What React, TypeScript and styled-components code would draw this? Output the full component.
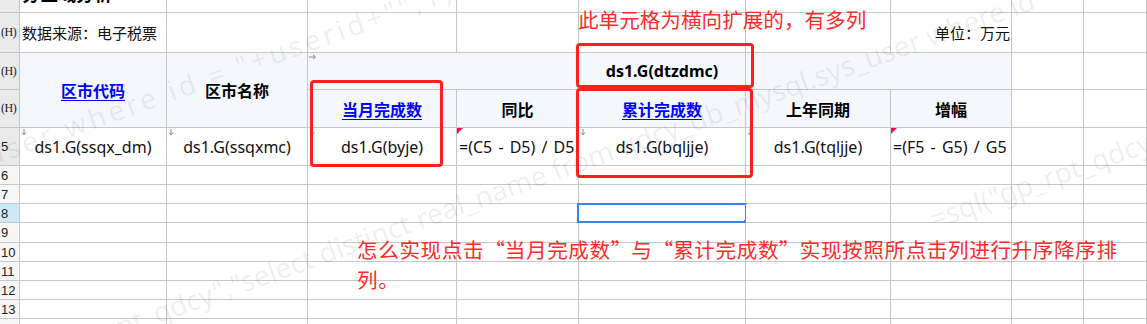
import React from 'react'
import styled, { createGlobalStyle } from 'styled-components'

const GlobalStyle = createGlobalStyle`
  html, body { margin: 0; padding: 0; background: #fff; }
  body { font-family: "Noto Sans", "Noto Sans CJK SC", sans-serif; }
`

const WM = '=sql("gp_rpt_qdcy","select distinct real_name from qdcy_db_mysql.sys_user where id = "+userid+"",1)+"'
const GAP = '          '

type Kind = 'plain' | 'bold' | 'link' | 'title' | 'formula'
type Spec = {
  col: number
  span?: number
  rowSpan?: number
  text?: string
  kind?: Kind
  align?: 'left' | 'center' | 'right'
  mark?: 'down' | 'right'
  corner?: boolean
  head?: boolean
  selected?: boolean
}

const Viewport = styled.div`
  position: relative;
  width: 1147px;
  height: 324px;
  overflow: hidden;
  background: #fff;
`

// first row is scrolled half out of view
const Sheet = styled.div`
  display: grid;
  grid-template-columns: 20px 147px 141px 149px 122px 167px 145px 121px 72px 1fr;
  grid-template-rows: 30px 40px 37px 38px 38px 19px 19px 19px 20px 19px 19px 19px 19px 19px;
  margin-top: -17px;
  color: #111;
`

const Cell = styled.div<{
  $col: number
  $row: number
  $span: number
  $rowSpan: number
  $align: string
  $head: boolean
}>`
  grid-column: ${p => p.$col + 1} / span ${p => p.$span};
  grid-row: ${p => p.$row} / span ${p => p.$rowSpan};
  position: relative;
  box-sizing: border-box;
  border-right: 1px solid #c6c6c6;
  border-bottom: 1px solid #c6c6c6;
  background: ${p => (p.$head ? '#f4f8fd' : '#fff')};
  display: flex;
  align-items: center;
  justify-content: ${p => (p.$align === 'left' ? 'flex-start' : p.$align === 'right' ? 'flex-end' : 'center')};
  padding: ${p => (p.$align === 'left' ? '0 0 0 2px' : p.$align === 'right' ? '0 1px 0 0' : '0')};
  font-size: 15px;
  white-space: nowrap;
`

const RowHead = styled.div<{ $row: number; $tone: 'dark' | 'light' | 'active' }>`
  grid-column: 1;
  grid-row: ${p => p.$row};
  box-sizing: border-box;
  border-right: 1px solid #c6c6c6;
  border-bottom: 1px solid #c6c6c6;
  background: ${p => (p.$tone === 'dark' ? '#eaeaea' : p.$tone === 'active' ? '#cde8f6' : '#f6f6f6')};
  display: flex;
  align-items: center;
  padding-left: 1px;
  font-family: "Liberation Sans", sans-serif;
  font-size: 13px;
  color: #222;
`

const HLabel = styled.span`
  font-family: "Liberation Serif", serif;
  font-size: 12px;
  letter-spacing: -0.5px;
`

const Title = styled.span`
  font-family: "Noto Sans CJK SC", sans-serif;
  font-weight: 700;
  font-size: 18px;
  color: #000;
  margin-bottom: 10px;
`

const Plain = styled.span`
  font-family: "Noto Sans", "Noto Sans CJK SC", sans-serif;
  font-size: 15px;
  color: #111;
`

const Value = styled(Plain)`
  font-size: 16px;
`

const Formula = styled(Value)`
  word-spacing: 2px;
`

const Bold = styled.span`
  font-family: "Noto Sans", "Noto Sans CJK SC", sans-serif;
  font-weight: 700;
  font-size: 16px;
  color: #000;
`

const Link = styled.span`
  font-family: "Noto Sans CJK SC", sans-serif;
  font-weight: 700;
  font-size: 16px;
  color: #0000ff;
  text-decoration: underline;
  text-underline-offset: 3px;
`

const Mark = styled.svg`
  position: absolute;
  left: 1px;
  top: 1px;
`

const RedCorner = styled.span`
  position: absolute;
  left: 0;
  top: 0;
  width: 0;
  height: 0;
  border-top: 6px solid #ff0a3c;
  border-right: 6px solid transparent;
`

const Selection = styled.span`
  position: absolute;
  left: -2px;
  top: -1px;
  width: 170px;
  height: 20px;
  box-sizing: border-box;
  border: 2px solid #3a86e8;

  &::after {
    content: '';
    position: absolute;
    right: -4px;
    bottom: -4px;
    width: 5px;
    height: 5px;
    background: #3a86e8;
  }
`

const RedBox = styled.div<{ $x: number; $y: number; $w: number; $h: number }>`
  position: absolute;
  left: ${p => p.$x}px;
  top: ${p => p.$y}px;
  width: ${p => p.$w}px;
  height: ${p => p.$h}px;
  box-sizing: border-box;
  border: 3px solid #ff1f1f;
  border-radius: 4px;
  pointer-events: none;
`

const Note = styled.div<{ $x: number; $y: number; $w: number; $spacing?: number }>`
  position: absolute;
  left: ${p => p.$x}px;
  top: ${p => p.$y}px;
  width: ${p => p.$w}px;
  color: #ff2b2b;
  font-family: "Noto Sans CJK SC", sans-serif;
  font-size: 20.6px;
  line-height: 30px;
  letter-spacing: ${p => p.$spacing ?? 0}px;
`

// full-width CJK quotation marks
const Quote = styled.span<{ $side: 'open' | 'close' }>`
  display: inline-block;
  width: 1em;
  text-align: ${p => (p.$side === 'open' ? 'right' : 'left')};
`

const Watermark = styled.div<{ $x: number; $y: number; $spacing?: number }>`
  position: absolute;
  left: ${p => p.$x}px;
  top: ${p => p.$y}px;
  transform: rotate(-19.7deg);
  transform-origin: 0 0;
  white-space: pre;
  font-family: "Noto Sans", sans-serif;
  font-size: 28px;
  line-height: 32px;
  letter-spacing: ${p => p.$spacing ?? 0}px;
  color: rgba(0, 0, 0, 0.07);
  pointer-events: none;
`

const DownArrow = () => (
  <Mark width="6" height="7" viewBox="0 0 6 7">
    <path d="M3 0v5M1 3.5L3 6 5 3.5" stroke="#8a8a8a" strokeWidth="1" fill="none" />
  </Mark>
)

const RightArrow = () => (
  <Mark width="8" height="6" viewBox="0 0 8 6">
    <path d="M0 3h6M4 1l2.5 2L4 5" stroke="#8a8a8a" strokeWidth="1" fill="none" />
  </Mark>
)

const blanks = (cols: number[]): Spec[] => cols.map(col => ({ col }))

const rows: Spec[][] = [
  [{ col: 1, text: '分区域分析', kind: 'title', align: 'left' }, ...blanks([2, 3, 4, 5, 6, 7, 8, 9])],
  [
    { col: 1, text: '数据来源：电子税票', align: 'left' },
    ...blanks([2, 3, 4, 5, 6]),
    { col: 7, text: '单位：万元', align: 'right' },
    ...blanks([8, 9]),
  ],
  [
    { col: 1, rowSpan: 2, text: '区市代码', kind: 'link', head: true },
    { col: 2, rowSpan: 2, text: '区市名称', kind: 'bold', head: true },
    { col: 3, span: 2, head: true, mark: 'right' },
    { col: 5, text: 'ds1.G(dtzdmc)', kind: 'bold', head: true },
    { col: 6, span: 2, head: true },
    ...blanks([8, 9]),
  ],
  [
    { col: 3, text: '当月完成数', kind: 'link', head: true },
    { col: 4, text: '同比', kind: 'bold', head: true },
    { col: 5, text: '累计完成数', kind: 'link', head: true },
    { col: 6, text: '上年同期', kind: 'bold', head: true },
    { col: 7, text: '增幅', kind: 'bold', head: true },
    ...blanks([8, 9]),
  ],
  [
    { col: 1, text: 'ds1.G(ssqx_dm)', mark: 'down' },
    { col: 2, text: 'ds1.G(ssqxmc)', mark: 'down' },
    { col: 3, text: 'ds1.G(byje)', mark: 'down' },
    { col: 4, text: '=(C5 - D5) / D5', kind: 'formula', align: 'left', corner: true },
    { col: 5, text: 'ds1.G(bqljje)', mark: 'down' },
    { col: 6, text: 'ds1.G(tqljje)', mark: 'down' },
    { col: 7, text: '=(F5 - G5) / G5', kind: 'formula', align: 'left', corner: true },
    ...blanks([8, 9]),
  ],
]

for (let r = 6; r <= 14; r++) {
  rows.push(blanks([1, 2, 3, 4, 5, 6, 7, 8, 9]).map(c => (r === 8 && c.col === 5 ? { ...c, selected: true } : c)))
}

const rowLabel = (r: number) => {
  if (r === 1 || r === 14) return null
  if (r <= 4) return <HLabel>(H)</HLabel>
  return String(r)
}

const renderText = (s: Spec, r: number) => {
  if (!s.text) return null
  switch (s.kind) {
    case 'title':
      return <Title>{s.text}</Title>
    case 'bold':
      return <Bold>{s.text}</Bold>
    case 'link':
      return <Link>{s.text}</Link>
    case 'formula':
      return <Formula>{s.text}</Formula>
    default:
      return r === 5 ? <Value>{s.text}</Value> : <Plain>{s.text}</Plain>
  }
}

const App = () => {
  return (
    <Viewport>
      <GlobalStyle />
      <Sheet>
        {rows.map((cells, i) => {
          const r = i + 1
          return (
            <React.Fragment key={r}>
              <RowHead $row={r} $tone={r === 8 ? 'active' : r <= 5 ? 'dark' : 'light'}>
                {rowLabel(r)}
              </RowHead>
              {cells.map(c => (
                <Cell
                  key={`${r}-${c.col}`}
                  $col={c.col}
                  $row={r}
                  $span={c.span ?? 1}
                  $rowSpan={c.rowSpan ?? 1}
                  $align={c.align ?? 'center'}
                  $head={!!c.head}
                >
                  {c.mark === 'down' && <DownArrow />}
                  {c.mark === 'right' && <RightArrow />}
                  {c.corner && <RedCorner />}
                  {renderText(c, r)}
                  {c.selected && <Selection />}
                </Cell>
              ))}
            </React.Fragment>
          )
        })}
      </Sheet>

      <Watermark $x={-19} $y={141} $spacing={3.5}>{'user where id = "+userid+"",1)+"'}</Watermark>
      <Watermark $x={-13} $y={356}>{WM + GAP + WM}</Watermark>
      <Watermark $x={925} $y={204}>{WM}</Watermark>

      <RedBox $x={310} $y={80} $w={133} $h={87} />
      <RedBox $x={576} $y={43} $w={178} $h={45} />
      <RedBox $x={576} $y={88} $w={177} $h={90} />

      <Note $x={578} $y={4} $w={320}>此单元格为横向扩展的，有多列</Note>
      <Note $x={357} $y={234} $w={772} $spacing={0.6}>
        怎么实现点击<Quote $side="open">“</Quote>当月完成数<Quote $side="close">”</Quote>与
        <Quote $side="open">“</Quote>累计完成数<Quote $side="close">”</Quote>实现按照所点击列进行升序降序排列。
      </Note>
    </Viewport>
  )
}

export default App
